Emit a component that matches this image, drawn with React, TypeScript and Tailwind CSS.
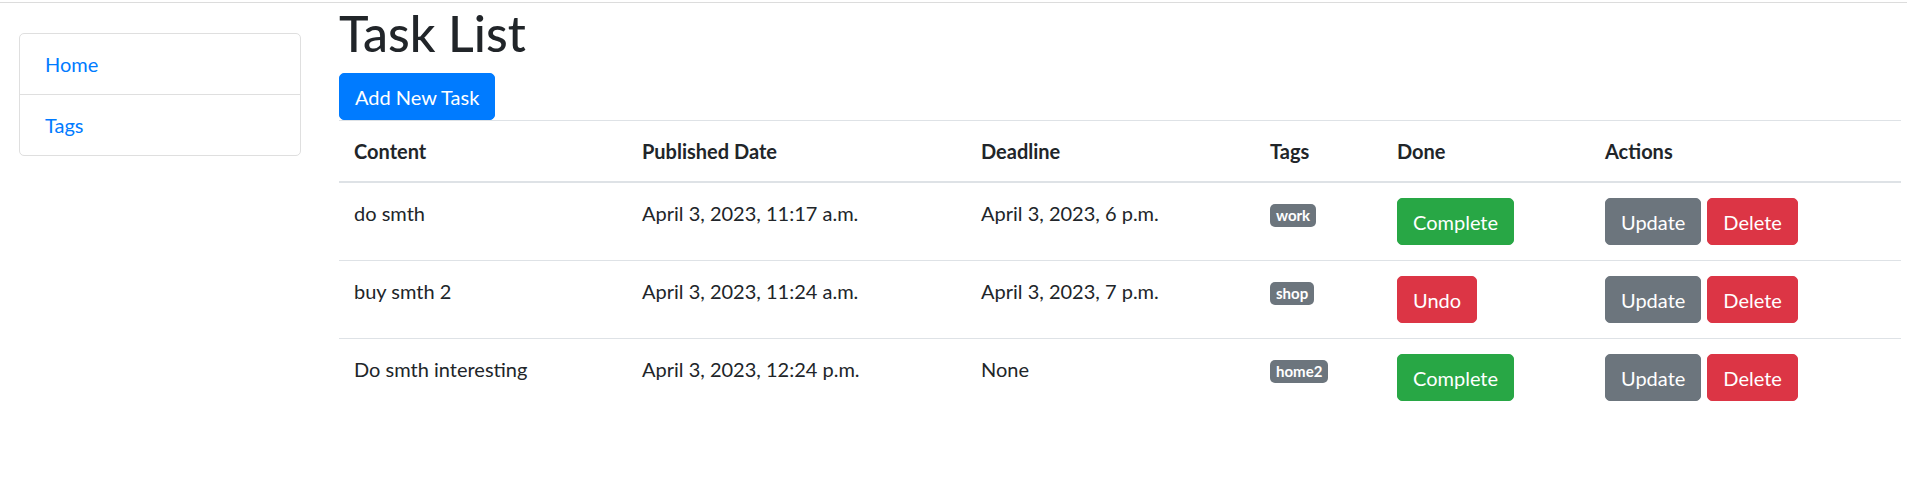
import React from "react";

type Task = {
  content: string;
  published: string;
  deadline: string;
  tag: string;
  done: boolean;
};

const tasks: Task[] = [
  { content: "do smth", published: "April 3, 2023, 11:17 a.m.", deadline: "April 3, 2023, 6 p.m.", tag: "work", done: false },
  { content: "buy smth 2", published: "April 3, 2023, 11:24 a.m.", deadline: "April 3, 2023, 7 p.m.", tag: "shop", done: true },
  { content: "Do smth interesting", published: "April 3, 2023, 12:24 p.m.", deadline: "None", tag: "home2", done: false },
];

function Btn({ children, color }: { children: React.ReactNode; color: "green" | "red" | "gray" | "blue" }) {
  const cls =
    color === "green"
      ? "bg-[#28a745] border-[#28a745]"
      : color === "red"
      ? "bg-[#dc3545] border-[#dc3545]"
      : color === "gray"
      ? "bg-[#6c757d] border-[#6c757d]"
      : "bg-[#007bff] border-[#007bff]";
  return (
    <button
      type="button"
      className={`inline-block border px-[15px] py-[7.5px] text-[20px] leading-[30px] text-white rounded-[5px] ${cls}`}
    >
      {children}
    </button>
  );
}

export default function App() {
  return (
    <div className="min-h-screen bg-white font-['Lato','Segoe_UI','Liberation_Sans',sans-serif] text-[20px] leading-[30px] text-[#212529]">
      <div className="h-[3px] border-b border-[#dcdcdc]" />
      <div className="flex">
        <aside className="w-[339px] shrink-0 pl-[19px] pr-[38px] pt-[30px]">
          <div className="border border-[#dfdfdf] rounded-[5px]">
            <div className="px-[25px] py-[15px] text-[#007bff]">Home</div>
            <div className="px-[25px] py-[15px] text-[#007bff] border-t border-[#dfdfdf]">Tags</div>
          </div>
        </aside>
        <main className="w-[1562px] shrink-0">
          <h1 className="text-[50px] leading-[60px] font-medium mb-[10px]">Task List</h1>
          <Btn color="blue">Add New Task</Btn>
          <table className="w-full table-fixed border-collapse">
            <thead>
              <tr>
                <th className="w-[288px] text-left font-bold p-[15px] border-t border-b-2 border-[#dee2e6] align-bottom">Content</th>
                <th className="w-[339px] text-left font-bold p-[15px] border-t border-b-2 border-[#dee2e6] align-bottom">Published Date</th>
                <th className="w-[289px] text-left font-bold p-[15px] border-t border-b-2 border-[#dee2e6] align-bottom">Deadline</th>
                <th className="w-[127px] text-left font-bold p-[15px] border-t border-b-2 border-[#dee2e6] align-bottom">Tags</th>
                <th className="w-[208px] text-left font-bold p-[15px] border-t border-b-2 border-[#dee2e6] align-bottom">Done</th>
                <th className="text-left font-bold p-[15px] border-t border-b-2 border-[#dee2e6] align-bottom">Actions</th>
              </tr>
            </thead>
            <tbody>
              {tasks.map((t) => (
                <tr key={t.content}>
                  <td className="p-[15px] border-t border-[#dee2e6] align-top">{t.content}</td>
                  <td className="p-[15px] border-t border-[#dee2e6] align-top">{t.published}</td>
                  <td className="p-[15px] border-t border-[#dee2e6] align-top">{t.deadline}</td>
                  <td className="p-[15px] border-t border-[#dee2e6] align-top">
                    <span className="inline-block bg-[#6c757d] text-white text-[15px] leading-none font-bold px-[6px] py-[3.75px] rounded-[5px] align-baseline">
                      {t.tag}
                    </span>
                  </td>
                  <td className="p-[15px] border-t border-[#dee2e6] align-top">
                    {t.done ? <Btn color="red">Undo</Btn> : <Btn color="green">Complete</Btn>}
                  </td>
                  <td className="p-[15px] border-t border-[#dee2e6] align-top">
                    <div className="flex gap-[6px]">
                      <Btn color="gray">Update</Btn>
                      <Btn color="red">Delete</Btn>
                    </div>
                  </td>
                </tr>
              ))}
            </tbody>
          </table>
        </main>
      </div>
    </div>
  );
}
